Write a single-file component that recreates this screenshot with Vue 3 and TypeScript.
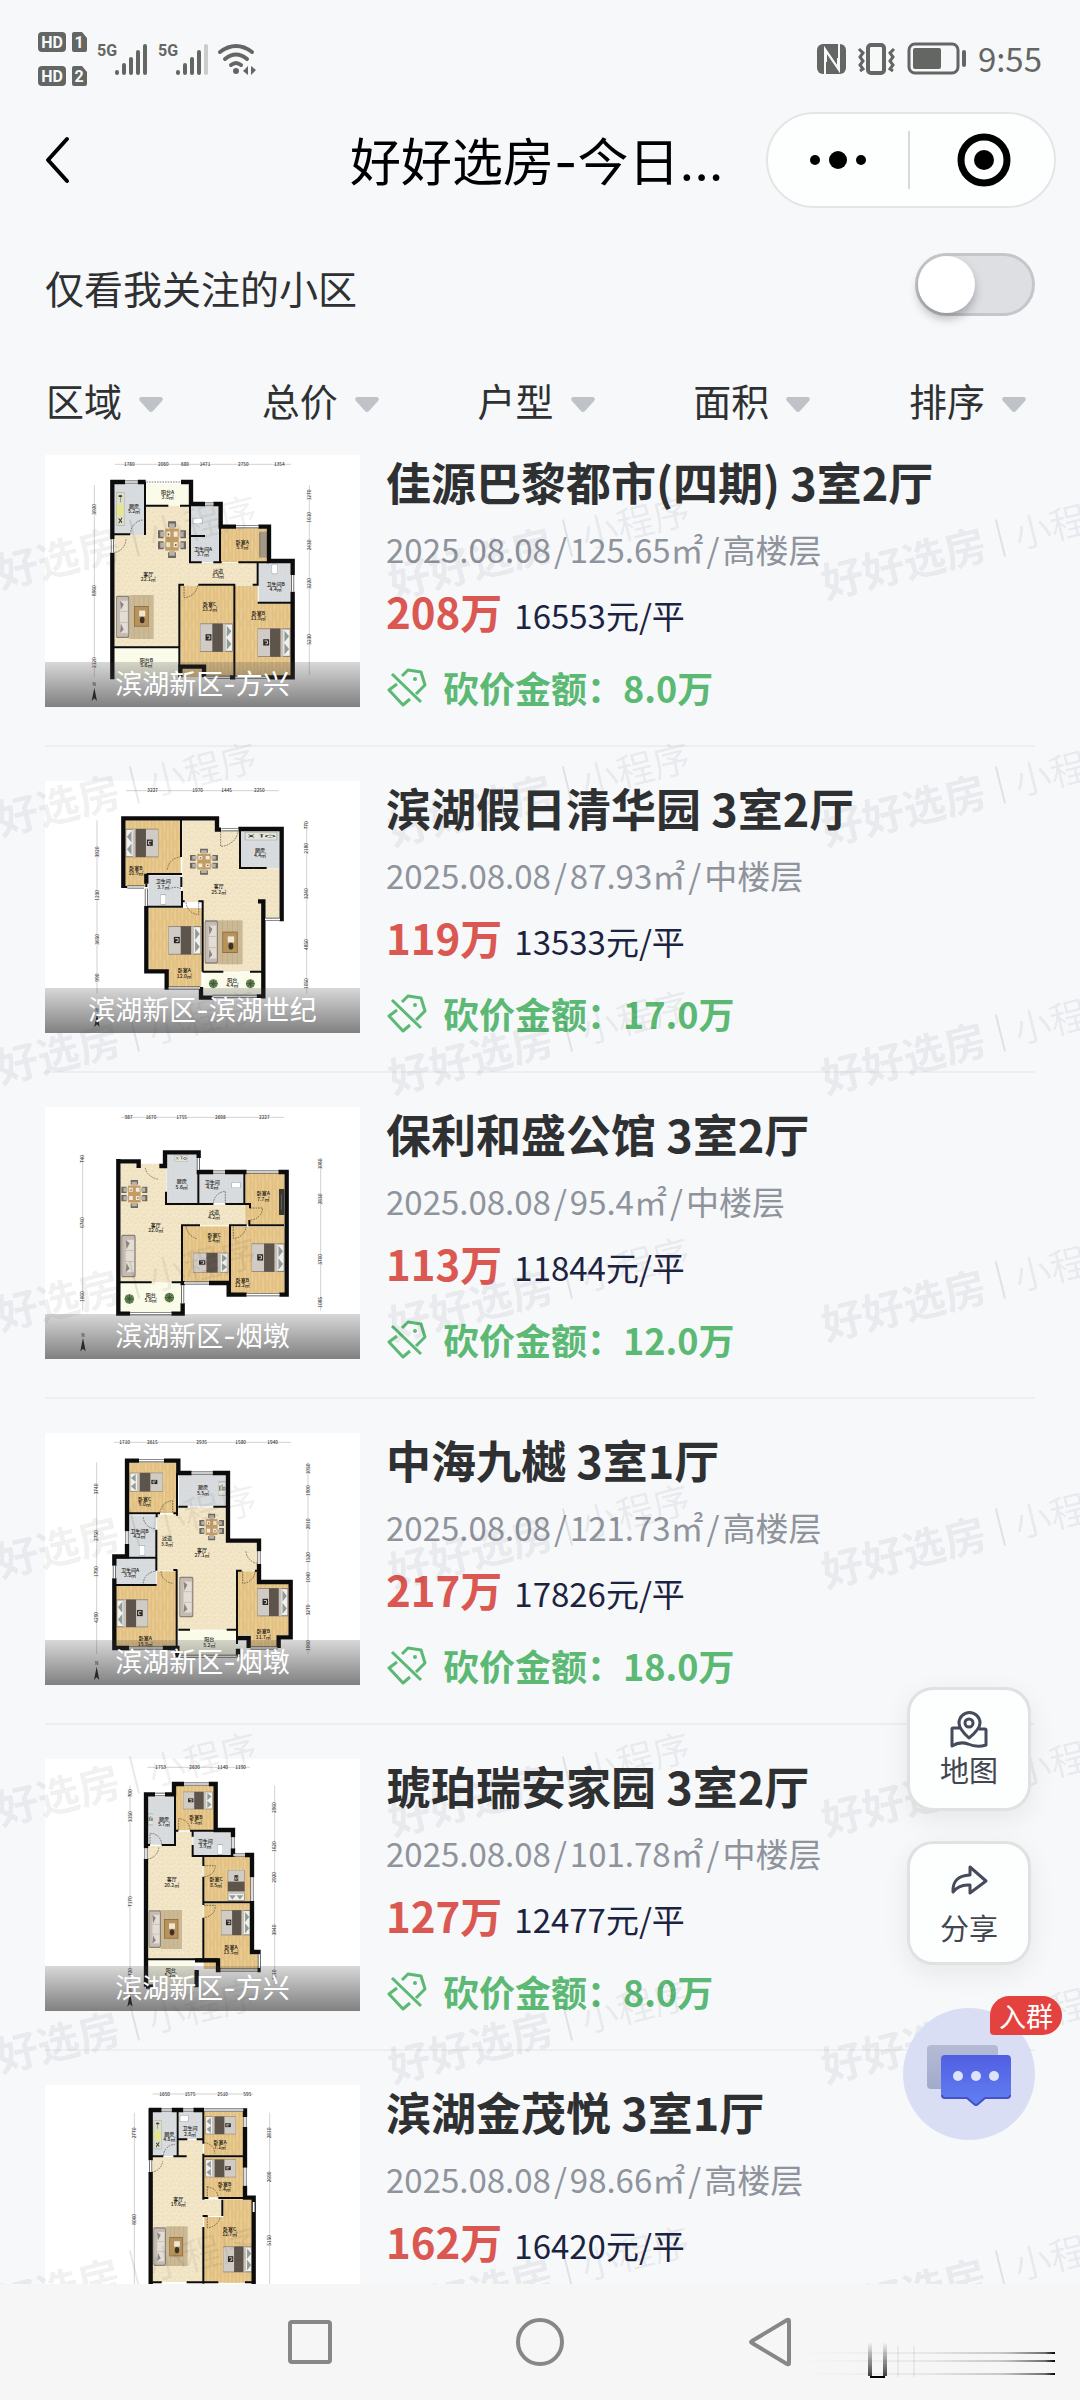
<script setup lang="ts">
import { ref } from 'vue'

type Rect = [kind: string, x: number, y: number, w: number, h: number]
type Furniture = [kind: string, x: number, y: number, w: number, h: number, turn?: 'flip' | 'down']
type Label = [x: number, y: number, name: string, area: string]
type Dim = [pos: number, text: string]

interface Plan {
  top: number
  rooms: Rect[]
  thick: string
  thin: string
  glass: string
  doors: string
  furniture: Furniture[]
  labels: Label[]
  ruler: { y: number; x1: number; x2: number; dims: Dim[] }
  left: { x: number; y1: number; y2: number; dims: Dim[] }
  right: { x: number; y1: number; y2: number; dims: Dim[] }
  north: [number, number]
}

interface Listing {
  name: string
  rooms: string
  date: string
  area: string
  floor: string
  price: number
  unit: number
  cut: string
  district: string
  plan: Plan
}

const plans: Plan[] = [
  {
    top: 45,
    rooms: [
      ['living', 343, 197, 224, 425], ['living', 560, 368, 212, 68], ['tile', 343, 132, 92, 152],
      ['balcony', 439, 132, 128, 65], ['tile', 573, 198, 86, 168], ['wood', 663, 265, 140, 101],
      ['tile', 776, 369, 98, 118], ['wood', 541, 437, 160, 274], ['wood', 705, 437, 68, 60],
      ['wood', 705, 491, 168, 220], ['balcony', 343, 625, 193, 92],
    ],
    thick: 'M337 120V298M337 338V718M331 126H375M413 126H437M543 126H573V192H615M640 192H662V260H708M775 260H807V363H878V405M878 455V712H800M706 712H690M541 712V680H612V712',
    thin: 'M435 126V285M390 283H337M437 197H505M540 197H570M570 190V367H605M573 288H615M660 260V367M640 367H665M715 367H807M773 367V437M758 434H773M773 488H878M535 434H552M595 434H703V712M538 434V680M337 622H538',
    glass: 'M375 126H413M615 192H640M708 260H775M878 405V455M337 298V338M612 712H690M706 712H800',
    doors: 'M392 283A40 40 0 0 1 430 240M378 298A42 42 0 0 1 343 338M552 440V473A42 42 0 0 0 593 436M439 126H543',
    furniture: [
      ['dining', 474, 244, 84, 110], ['rug', 388, 465, 73, 132], ['sofa', 348, 467, 40, 127],
      ['table', 402, 498, 44, 62], ['bed', 600, 550, 98, 86], ['bed', 773, 565, 98, 86],
      ['stove', 348, 156, 26, 102], ['bath', 578, 234, 30, 18], ['bath', 815, 371, 18, 32], ['cabinet', 777, 275, 24, 78],
    ],
    labels: [
      [402, 204, '厨房', '5.2㎡'], [503, 162, '阳台A', '3.8㎡'], [445, 408, '客厅', '22.1㎡'], [609, 332, '卫生间A', '3.7㎡'],
      [727, 312, '卧室A', '5.9㎡'], [654, 398, '过道', '3.3㎡'], [827, 438, '卫生间B', '4.4㎡'], [629, 497, '卧室C', '13.2㎡'],
      [775, 525, '卧室B', '11.8㎡'], [439, 666, '阳台B', '5.6㎡'],
    ],
    ruler: { y: 73, x1: 345, x2: 873, dims: [[388, '1780'], [490, '2060'], [555, '680'], [615, '1471'], [730, '2750'], [838, '1354']] },
    left: { x: 283, y1: 135, y2: 712, dims: [[208, '3920'], [452, '8960'], [668, '2120']] },
    right: { x: 928, y1: 135, y2: 705, dims: [[165, '1270'], [232, '1610'], [315, '2430'], [430, '3220'], [598, '5230']] },
    north: [283, 765],
  },
  {
    top: 62,
    rooms: [
      ['wood', 376, 180, 166, 160], ['wood', 376, 336, 64, 44], ['living', 547, 180, 108, 245],
      ['living', 608, 212, 112, 422], ['living', 700, 325, 138, 150], ['living', 700, 325, 85, 308],
      ['tile', 722, 212, 116, 112], ['tile', 445, 345, 98, 93], ['wood', 446, 443, 160, 190],
      ['wood', 506, 630, 98, 52], ['balcony', 612, 637, 178, 64],
    ],
    thick: 'M370 168V383M364 174H651V208H663M715 206H845V483M439 340V370M439 437V633H500V688M603 680V712H638M770 708H790V423H774',
    thin: 'M543 174V290M544 350V380M440 341H546M440 439H546V392M546 423H554M595 423H608V634M608 634H670M750 634H790M720 206V323H760M800 323H760M370 380H382M439 370V380',
    glass: 'M382 380H432M506 683H600M638 708H770M795 477H840M439 385V437M665 208H715',
    doors: 'M502 328A42 42 0 0 1 541 290M662 212V258A54 54 0 0 0 715 210M558 426A40 40 0 0 0 596 463V426M543 385A35 35 0 0 0 510 385',
    furniture: [
      ['bed', 377, 205, 98, 86, 'flip'], ['dining', 570, 265, 84, 78], ['bed', 505, 497, 98, 86],
      ['rug', 653, 480, 75, 132], ['sofa', 614, 480, 40, 130], ['table', 667, 514, 46, 64],
      ['plant', 626, 656, 28, 28], ['plant', 737, 656, 28, 28], ['counter', 734, 215, 98, 25], ['bath', 481, 402, 17, 31],
    ],
    labels: [
      [408, 328, '卧室B', '10.9㎡'], [490, 369, '卫生间', '3.7㎡'], [656, 384, '客厅', '25.2㎡'], [780, 275, '厨房', '4.4㎡'],
      [553, 636, '卧室A', '12.0㎡'], [697, 664, '阳台', '4.4㎡'],
    ],
    ruler: { y: 91, x1: 378, x2: 836, dims: [[458, '3227'], [593, '1970'], [680, '1445'], [778, '2250']] },
    left: { x: 291, y1: 180, y2: 700, dims: [[275, '3920'], [405, '1230'], [537, '3650'], [652, '990']] },
    right: { x: 920, y1: 180, y2: 700, dims: [[195, '770'], [264, '2180'], [400, '3240'], [553, '4850'], [670, '1050']] },
    north: [291, 782],
  },
  {
    top: 51,
    rooms: [
      ['living', 361, 221, 138, 356], ['living', 490, 344, 258, 62], ['living', 490, 400, 56, 177],
      ['tile', 500, 192, 93, 148], ['tile', 597, 251, 134, 88], ['wood', 736, 247, 117, 156],
      ['wood', 549, 409, 138, 168], ['wood', 693, 410, 160, 200], ['balcony', 362, 580, 184, 90],
    ],
    thick: 'M355 207V677M349 214H416V234M478 228H495V187H596V204M590 246H640M675 246H740M835 246H860V614H838M349 671H390M514 671H548V640M548 573V586M627 579H686V614H740',
    thin: 'M498 305V342H640M595 204V342M676 342H750V355M733 246V342M748 390V406H852M740 406H690V610M600 406H546V580M355 577H455M515 577H552',
    glass: 'M640 246H675M740 246H835M595 204V240M548 586V640M552 579H627M740 614H838M390 671H514',
    doors: 'M436 234A50 40 0 0 0 476 268M558 408A45 45 0 0 0 590 446M640 340A38 38 0 0 1 676 304V340M750 354H788A38 38 0 0 1 752 390M700 410V445A38 38 0 0 0 738 410',
    furniture: [
      ['dining', 364, 270, 78, 84], ['sofa', 364, 434, 43, 128], ['bed', 579, 488, 106, 60],
      ['bed', 755, 460, 98, 86], ['plant', 373, 612, 30, 30], ['plant', 493, 608, 30, 30],
      ['counter', 524, 195, 40, 21], ['bath', 694, 277, 28, 17], ['tv', 837, 297, 16, 78],
    ],
    labels: [
      [545, 280, '厨房', '5.6㎡'], [637, 282, '卫生间', '4.6㎡'], [790, 316, '卧室A', '7.7㎡'], [642, 371, '过道', '4.2㎡'],
      [467, 411, '客厅', '22.0㎡'], [642, 441, '卧室C', '8.4㎡'], [727, 576, '卧室B', '12.2㎡'], [452, 620, '阳台', '5.6㎡'],
    ],
    ruler: { y: 82, x1: 362, x2: 853, dims: [[386, '987'], [453, '1670'], [545, '1755'], [661, '2698'], [793, '2227']] },
    left: { x: 248, y1: 193, y2: 662, dims: [[207, '740'], [398, '6740'], [620, '1660']] },
    right: { x: 962, y1: 205, y2: 662, dims: [[222, '1080'], [327, '2830'], [508, '3700'], [637, '1085']] },
    north: [249, 766],
  },
  {
    top: 67,
    rooms: [
      ['wood', 386, 155, 144, 152], ['tile', 537, 190, 142, 97], ['living', 471, 312, 64, 168],
      ['living', 532, 290, 146, 367], ['living', 670, 395, 103, 86], ['living', 670, 480, 40, 177],
      ['tile', 386, 314, 82, 124], ['tile', 347, 444, 122, 77], ['wood', 347, 526, 182, 182], ['wood', 471, 482, 58, 50],
      ['wood', 714, 482, 58, 40], ['wood', 714, 519, 154, 154], ['wood', 752, 670, 80, 42], ['balcony', 536, 660, 173, 77],
    ],
    thick: 'M381 144V362M381 400V437H343V465M343 503V712H387M375 150H417M492 150H535V187H575M638 187H684V390H777V422M777 460V514H872V680H836V712M714 682H746V712M488 712H532V740M714 714V740',
    thin: 'M383 308H480M520 308H532M470 308V320M469 357V480M531 187V315M535 288H563M640 288H680M343 441H470M343 523H470M530 478V712M520 478H532M711 480V700M708 480H725M765 480H777M535 657H570M680 657H711',
    glass: 'M417 150H492M575 187H638M381 362V400M343 465V503M777 422V460M387 712H488M752 712H832M536 737H710',
    doors: 'M480 306A40 40 0 0 1 518 270V306M738 422A38 38 0 0 0 775 458M483 482A38 38 0 0 0 520 518M728 482V518A38 38 0 0 0 765 482M430 320A36 36 0 0 0 466 354M430 518A38 38 0 0 1 468 482',
    furniture: [
      ['bed', 389, 186, 100, 57, 'flip'], ['dining', 598, 309, 74, 80], ['sofa', 538, 498, 42, 122],
      ['bed', 350, 566, 94, 84, 'flip'], ['bed', 772, 532, 92, 85], ['counter', 655, 212, 22, 44], ['bath', 417, 403, 18, 33],
    ],
    labels: [
      [434, 270, '卧室C', '9.0㎡'], [609, 236, '厨房', '5.5㎡'], [418, 366, '卫生间B', '4.2㎡'], [501, 389, '过道', '3.8㎡'],
      [606, 424, '客厅', '27.1㎡'], [390, 483, '卫生间A', '3.8㎡'], [436, 689, '卧室A', '15.8㎡'], [790, 668, '卧室B', '11.7㎡'], [628, 692, '阳台', '5.2㎡'],
    ],
    ruler: { y: 95, x1: 342, x2: 873, dims: [[374, '1710'], [457, '2615'], [605, '2935'], [722, '1580'], [818, '1940']] },
    left: { x: 290, y1: 155, y2: 730, dims: [[235, '3740'], [375, '2750'], [483, '1790'], [620, '4290']] },
    right: { x: 924, y1: 155, y2: 730, dims: [[175, '1050'], [240, '1900'], [340, '2810'], [440, '1520'], [500, '1040'], [598, '3270'], [705, '1060']] },
    north: [290, 790],
  },
  {
    top: 57,
    rooms: [
      ['tile', 443, 167, 80, 147], ['wood', 527, 137, 115, 134], ['living', 443, 318, 165, 340],
      ['living', 527, 275, 51, 50], ['tile', 580, 275, 117, 71], ['wood', 611, 350, 142, 134],
      ['wood', 611, 490, 140, 197], ['wood', 745, 643, 33, 44], ['balcony', 443, 661, 143, 80],
    ],
    thick: 'M438 157V325M438 357V740M432 163H465M495 163H522V132H552M626 132H647V270H699V292M699 325V350M735 345H756V412M756 483V636H782M438 740H460M590 742V690M585 661H654V690H662M772 690H782',
    thin: 'M525 160V315H485M438 315H450M525 272H535M570 272H700M578 272V290M578 315V348H700M610 348V378M610 410V495M610 533V658M610 487H756M438 658H655',
    glass: 'M465 163H495M552 132H626M699 292V325M700 345H735M756 412V483M662 690H772M778 643V684M438 325V357',
    doors: 'M450 312V280A34 34 0 0 1 485 312M442 357A36 36 0 0 0 476 322M536 270V236A34 34 0 0 1 570 270M612 377H646A34 34 0 0 1 612 410M612 496H646A34 34 0 0 1 612 532',
    furniture: [
      ['bed', 549, 155, 89, 53], ['bed', 683, 390, 51, 92, 'down'], ['bed', 663, 510, 88, 76],
      ['rug', 482, 510, 64, 117], ['sofa', 446, 511, 37, 113], ['table', 492, 537, 43, 59],
      ['counter', 445, 220, 14, 36], ['bath', 652, 313, 17, 31],
    ],
    labels: [
      [492, 243, '厨房', '5.7㎡'], [588, 237, '卧室B', '7.5㎡'], [616, 309, '卫生间', '3.9㎡'], [515, 424, '客厅', '20.2㎡'],
      [648, 424, '卧室C', '8.5㎡'], [693, 627, '卧室A', '13.5㎡'], [512, 696, '阳台', '5.2㎡'],
    ],
    ruler: { y: 82, x1: 442, x2: 750, dims: [[482, '1753'], [584, '2630'], [668, '1140'], [722, '1190']] },
    left: { x: 390, y1: 137, y2: 740, dims: [[160, '700'], [230, '3150'], [485, '7170'], [700, '1720']] },
    right: { x: 824, y1: 137, y2: 735, dims: [[203, '2960'], [320, '1620'], [412, '2920'], [570, '3940'], [705, '1210']] },
    north: [390, 782],
  },
  {
    top: 44,
    rooms: [
      ['tile', 457, 124, 73, 133], ['tile', 537, 124, 72, 82], ['wood', 612, 124, 118, 132],
      ['wood', 612, 261, 118, 120], ['living', 457, 260, 152, 375], ['living', 537, 209, 72, 55],
      ['living', 605, 387, 62, 50], ['wood', 670, 387, 90, 250], ['wood', 612, 440, 148, 197], ['balcony', 457, 640, 152, 90],
    ],
    thick: 'M452 114V270M452 305V800M447 119H485M515 119H550M580 119H612M735 114V140M735 170V292M735 346V382H761V800',
    thin: 'M533 119V258M447 258H490M520 258H560M533 207H562M590 207H610M610 119V220M610 250V388M610 258H735M610 383H625M655 383H760M667 388V437M608 437H623M610 470V640M447 636H485M560 636H655M735 636H765',
    glass: 'M485 119H515M550 119H580M612 119H730M735 140V170M735 292V346M452 270V305M761 395V425',
    doors: 'M490 255A36 36 0 0 1 525 222M455 305A36 36 0 0 0 488 272M612 217A34 34 0 0 1 645 250M622 348V382M622 350A34 34 0 0 1 655 382M622 437V472A38 38 0 0 0 660 440',
    furniture: [
      ['bed', 616, 138, 92, 54, 'flip'], ['bed', 616, 267, 92, 54, 'flip'], ['bed', 669, 528, 88, 78],
      ['rug', 498, 468, 65, 119], ['sofa', 460, 471, 38, 116], ['table', 508, 500, 41, 58],
      ['stove', 461, 149, 24, 88], ['bath', 539, 135, 27, 19],
    ],
    labels: [
      [508, 196, '厨房', '4.8㎡'], [570, 180, '卫生间', '2.8㎡'], [660, 221, '卧室A', '7.1㎡'], [674, 347, '卧室B', '7.4㎡'],
      [535, 392, '客厅', '19.6㎡'], [689, 482, '卧室C', '12.7㎡'],
    ],
    ruler: { y: 71, x1: 458, x2: 760, dims: [[494, '1650'], [570, '1575'], [668, '2510'], [742, '595']] },
    left: { x: 403, y1: 127, y2: 720, dims: [[188, '2770'], [447, '8060'], [700, '1210']] },
    right: { x: 809, y1: 127, y2: 720, dims: [[188, '2810'], [320, '2690'], [510, '5150'], [700, '1140']] },
    north: [403, 770],
  },
]

const listings: Listing[] = [
  { name: '佳源巴黎都市(四期)', rooms: '3室2厅', date: '2025.08.08', area: '125.65', floor: '高楼层', price: 208, unit: 16553, cut: '8.0', district: '滨湖新区-方兴', plan: plans[0] },
  { name: '滨湖假日清华园', rooms: '3室2厅', date: '2025.08.08', area: '87.93', floor: '中楼层', price: 119, unit: 13533, cut: '17.0', district: '滨湖新区-滨湖世纪', plan: plans[1] },
  { name: '保利和盛公馆', rooms: '3室2厅', date: '2025.08.08', area: '95.4', floor: '中楼层', price: 113, unit: 11844, cut: '12.0', district: '滨湖新区-烟墩', plan: plans[2] },
  { name: '中海九樾', rooms: '3室1厅', date: '2025.08.08', area: '121.73', floor: '高楼层', price: 217, unit: 17826, cut: '18.0', district: '滨湖新区-烟墩', plan: plans[3] },
  { name: '琥珀瑞安家园', rooms: '3室2厅', date: '2025.08.08', area: '101.78', floor: '中楼层', price: 127, unit: 12477, cut: '8.0', district: '滨湖新区-方兴', plan: plans[4] },
  { name: '滨湖金茂悦', rooms: '3室1厅', date: '2025.08.08', area: '98.66', floor: '高楼层', price: 162, unit: 16420, cut: '10.0', district: '滨湖新区-方兴', plan: plans[5] },
]

const filters = ['区域', '总价', '户型', '面积', '排序']
const onlyFollowed = ref(false)

const fills: Record<string, string> = {
  wood: 'url(#wood)',
  living: 'url(#stone)',
  tile: 'url(#tile)',
  balcony: '#fafbe9',
}

// Furniture symbols are drawn on a 100 × 100 grid and scaled into place.
function place([, x, y, w, h, turn]: Furniture): string {
  if (turn === 'flip') return `translate(${x + w} ${y}) scale(${-w / 100} ${h / 100})`
  if (turn === 'down') return `translate(${x + w} ${y}) rotate(90) scale(${h / 100} ${w / 100})`
  return `translate(${x} ${y}) scale(${w / 100} ${h / 100})`
}

const marks = Array.from({ length: 8 }, (_, row) =>
  [-40, 393, 826].map((x) => ({ x, y: 159 + Math.round(row * 247.3) })),
).flat()
</script>

<template>
  <div class="page">
    <svg class="defs" width="0" height="0" aria-hidden="true">
      <defs>
        <pattern id="wood" width="22" height="60" patternUnits="userSpaceOnUse">
          <rect width="22" height="60" fill="#e6c588" />
          <path d="M3 0V60M14 0V60" stroke="#dcb877" stroke-width="2" />
          <path d="M9 0V34M19 20V60" stroke="#ecd09a" stroke-width="3" />
        </pattern>
        <pattern id="stone" width="26" height="26" patternUnits="userSpaceOnUse">
          <rect width="26" height="26" fill="#f2e5c6" />
          <path d="M4 5h4M15 9h5M8 18h3M20 22h3" stroke="#e9d9b2" stroke-width="3" />
          <path d="M10 3h4M2 13h4M16 16h4" stroke="#f8efd8" stroke-width="3" />
        </pattern>
        <pattern id="tile" width="14" height="14" patternUnits="userSpaceOnUse">
          <rect width="14" height="14" fill="#d8dcdf" />
          <path d="M0 0H14M0 0V14" stroke="#cbd0d3" stroke-width="1" />
        </pattern>
        <g id="bed">
          <rect width="100" height="100" fill="#8e8377" />
          <rect x="1" y="3" width="38" height="94" fill="#d0cbc4" />
          <rect x="38" y="1" width="32" height="98" fill="#5d544b" />
          <rect x="70" y="1" width="8" height="98" fill="#c9c2b8" />
          <rect x="78" y="4" width="20" height="92" fill="#f1f0ec" />
          <path d="M82 8L96 28L82 48ZM82 52L96 72L82 92Z" fill="#8d9b99" />
          <rect x="17" y="38" width="18" height="22" fill="#2b2724" />
          <path d="M21 44h9v10h-6" stroke="#ddd" stroke-width="3" fill="none" />
        </g>
        <g id="sofa">
          <rect width="100" height="100" rx="8" fill="#8a8179" />
          <rect x="6" y="3" width="86" height="94" rx="6" fill="#c4bbb2" />
          <rect x="30" y="12" width="58" height="24" fill="#e3ddd6" />
          <rect x="30" y="38" width="58" height="24" fill="#e3ddd6" />
          <rect x="30" y="64" width="58" height="24" fill="#e3ddd6" />
          <path d="M30 12l28 8l-22 14ZM30 88l28-8l-22-14Z" fill="#8b8580" />
        </g>
        <g id="rug">
          <rect width="100" height="100" fill="#cbb995" />
          <path d="M20 0V100M40 0V100M60 0V100M80 0V100" stroke="#bfab86" stroke-width="3" />
        </g>
        <g id="table">
          <rect width="100" height="100" fill="#8b6b3d" />
          <rect x="5" y="4" width="90" height="92" fill="#b7925a" />
          <rect x="35" y="22" width="42" height="28" fill="#eee5d5" />
          <circle cx="56" cy="68" r="16" fill="#3a3227" />
        </g>
        <g id="dining">
          <path d="M36 0H64V16H36ZM36 84H64V100H36ZM0 24H20V46H0ZM0 54H20V76H0ZM80 24H100V46H80ZM80 54H100V76H80Z" fill="#6d6660" />
          <path d="M40 6H60V20H40ZM40 80H60V94H40ZM8 28H24V42H8ZM8 58H24V72H8ZM76 28H92V42H76ZM76 58H92V72H76Z" fill="#bab2a8" />
          <rect x="26" y="20" width="48" height="60" fill="#c39c63" />
          <path d="M30 28H44V42H30ZM56 28H70V42H56ZM30 57H44V71H30ZM56 57H70V71H56Z" fill="#f1eadf" />
          <path d="M35 33h5v5h-5ZM61 62h5v5h-5Z" fill="#80522f" />
        </g>
        <g id="stove">
          <rect width="100" height="100" fill="#b9bcae" />
          <rect x="8" y="3" width="84" height="94" fill="#dddfc9" />
          <rect x="12" y="38" width="76" height="30" fill="#e5e789" />
          <path d="M30 12h40M50 8v22M30 78l40 12M70 76l-40 16" stroke="#3c3c38" stroke-width="5" />
        </g>
        <g id="counter">
          <rect width="100" height="100" fill="#aeb2b4" />
          <rect x="3" y="8" width="94" height="84" fill="#e3e5d8" />
          <path d="M12 30l16 34M28 30l-16 34M44 25h14M52 25v40" stroke="#3f4140" stroke-width="5" />
          <circle cx="78" cy="50" r="13" fill="none" stroke="#3f4140" stroke-width="6" />
        </g>
        <g id="bath">
          <rect width="100" height="100" rx="12" fill="#a7abad" />
          <rect x="7" y="7" width="86" height="86" rx="12" fill="#fff" />
        </g>
        <g id="plant">
          <circle cx="50" cy="50" r="48" fill="#6d8a5b" />
          <path d="M50 5V95M5 50H95M18 18L82 82M82 18L18 82" stroke="#39512c" stroke-width="9" />
        </g>
        <g id="cabinet"><rect width="100" height="100" fill="#a39885" /><path d="M12 4V96" stroke="#7c725f" stroke-width="8" /></g>
        <g id="tv"><rect width="100" height="100" fill="#3a3632" /><path d="M45 20V80" stroke="#777" stroke-width="12" /></g>
      </defs>
    </svg>

    <header class="status">
      <svg class="status-left" width="222" height="60" viewBox="36 28 222 60" aria-label="信号">
        <g fill="#646664">
          <rect x="38" y="32" width="28" height="20" rx="4" />
          <path d="M74 32h8l5 6v12a2 2 0 0 1-2 2H74a2 2 0 0 1-2-2V34a2 2 0 0 1 2-2Z" />
          <rect x="38" y="66" width="28" height="20" rx="4" />
          <path d="M74 66h8l5 6v12a2 2 0 0 1-2 2H74a2 2 0 0 1-2-2V68a2 2 0 0 1 2-2Z" />
        </g>
        <g class="tiny" fill="#f7f8fa" text-anchor="middle">
          <text x="52" y="48">HD</text><text x="79" y="48">1</text>
          <text x="52" y="82">HD</text><text x="79" y="82">2</text>
        </g>
        <g class="tiny" fill="#646664"><text x="97" y="56">5G</text><text x="158" y="56">5G</text></g>
        <g stroke="#646664" stroke-width="4" stroke-linecap="round">
          <path d="M117 72v1M124 65v8M131 59v14M138 52v21M145 46v27" />
          <path d="M178 72v1M185 65v8M192 59v14M199 52v21" />
          <path d="M206 46v27" stroke="#cbcdcc" />
        </g>
        <g fill="none" stroke="#646664" stroke-width="4" stroke-linecap="round">
          <path d="M220 52Q236 40 252 52M225 59Q236 50 247 59M231 65Q236 61 241 65" />
        </g>
        <circle cx="236" cy="71" r="3" fill="#646664" />
        <path d="M243 71l5-5v9ZM256 70l-5 5v-9Z" fill="#646664" />
      </svg>
      <div class="status-right">
        <svg width="150" height="34" viewBox="814 41 150 34" aria-label="电量">
          <rect x="815" y="44" width="29" height="30" rx="6" fill="#646664" />
          <path d="M823 74V49L836 68V58M837 44V70L824 51V62" fill="none" stroke="#f7f8fa" stroke-width="2" />
          <rect x="866" y="45" width="16" height="28" rx="3" fill="none" stroke="#646664" stroke-width="4" />
          <path d="M857 49l4 4-3 4 3 4-3 4 3 4-3 2M892 49l-4 4 3 4-3 4 3 4-3 4 3 2" fill="none" stroke="#646664" stroke-width="3" />
          <rect x="907" y="44" width="49" height="29" rx="6" fill="none" stroke="#646664" stroke-width="3" />
          <rect x="911" y="48" width="28" height="21" rx="2" fill="#646664" />
          <rect x="960" y="50" width="4" height="17" rx="2" fill="#646664" />
        </svg>
        <time>9:55</time>
      </div>
    </header>

    <nav class="bar">
      <button class="back" type="button" aria-label="返回">
        <svg width="28" height="50" viewBox="0 0 28 50"><path d="M23 4L4 25L23 46" fill="none" stroke="#000" stroke-width="4" stroke-linecap="round" stroke-linejoin="round" /></svg>
      </button>
      <h1>好好选房-今日...</h1>
      <div class="capsule">
        <button type="button" aria-label="更多">
          <svg width="60" height="20" viewBox="0 0 60 20"><circle cx="7" cy="10" r="5" /><circle cx="30" cy="10" r="9" /><circle cx="53" cy="10" r="5" /></svg>
        </button>
        <i></i>
        <button type="button" aria-label="关闭">
          <svg width="54" height="54" viewBox="0 0 54 54"><circle cx="27" cy="27" r="23" fill="none" stroke="#000" stroke-width="7" /><circle cx="27" cy="27" r="10" /></svg>
        </button>
      </div>
    </nav>

    <label class="follow">
      <span>仅看我关注的小区</span>
      <input v-model="onlyFollowed" type="checkbox" role="switch" />
    </label>

    <div class="filters">
      <label v-for="f in filters" :key="f">
        <select :aria-label="f"><option>{{ f }}</option></select>
        <svg width="24" height="15" viewBox="0 0 24 15"><path d="M2 0H22Q25 1 23 4L14 14Q12 16 10 14L1 4Q-1 1 2 0Z" fill="#bfc2c7" /></svg>
      </label>
    </div>

    <main class="list">
      <article v-for="item in listings" :key="item.name" class="card">
        <figure>
          <svg class="plan" :viewBox="`135 ${item.plan.top} 945 756`" aria-hidden="true">
            <rect x="135" :y="item.plan.top" width="945" height="756" fill="#fff" />
            <rect v-for="(r, i) in item.plan.rooms" :key="i" :x="r[1]" :y="r[2]" :width="r[3]" :height="r[4]" :fill="fills[r[0]]" />
            <use v-for="(f, i) in item.plan.furniture" :key="i" :href="`#${f[0]}`" :transform="place(f)" />
            <path :d="item.plan.doors" fill="none" stroke="#4a443a" stroke-width="2" stroke-dasharray="5 3" />
            <path :d="item.plan.thin" fill="none" stroke="#0c0c0c" stroke-width="6" />
            <path :d="item.plan.thick" fill="none" stroke="#0c0c0c" stroke-width="13" />
            <path :d="item.plan.glass" fill="none" stroke="#333" stroke-width="9" />
            <path :d="item.plan.glass" fill="none" stroke="#fff" stroke-width="5" />
            <g class="room-label">
              <template v-for="(l, i) in item.plan.labels" :key="i">
                <text :x="l[0]" :y="l[1]">{{ l[2] }}</text>
                <text :x="l[0]" :y="l[1] + 16">{{ l[3] }}</text>
              </template>
            </g>
            <path
              :d="`M${item.plan.ruler.x1} ${item.plan.ruler.y}H${item.plan.ruler.x2}M${item.plan.left.x} ${item.plan.left.y1}V${item.plan.left.y2}M${item.plan.right.x} ${item.plan.right.y1}V${item.plan.right.y2}`"
              stroke="#777"
              stroke-width="1"
            />
            <g class="dim">
              <text v-for="d in item.plan.ruler.dims" :key="d[0]" :x="d[0]" :y="item.plan.ruler.y + 5">{{ d[1] }}</text>
              <text v-for="d in item.plan.left.dims" :key="d[0]" :transform="`translate(${item.plan.left.x + 5} ${d[0]}) rotate(-90)`">{{ d[1] }}</text>
              <text v-for="d in item.plan.right.dims" :key="d[0]" :transform="`translate(${item.plan.right.x + 5} ${d[0]}) rotate(-90)`">{{ d[1] }}</text>
              <text :x="item.plan.north[0]" :y="item.plan.north[1] - 26">N</text>
            </g>
            <path :transform="`translate(${item.plan.north[0]} ${item.plan.north[1]})`" d="M0-22L8 18L0 10L-8 18Z" fill="#111" />
          </svg>
          <figcaption>{{ item.district }}</figcaption>
        </figure>
        <div class="info">
          <h2>{{ item.name }} {{ item.rooms }}</h2>
          <p class="meta"><span>{{ item.date }}</span><i>/</i><span>{{ item.area }}㎡</span><i>/</i><span>{{ item.floor }}</span></p>
          <p class="price"><strong>{{ item.price }}万</strong><span>{{ item.unit }}元/平</span></p>
          <p class="cut">
            <svg width="42" height="40" viewBox="0 0 42 40" fill="none" stroke="#5bb974" stroke-width="3">
              <path d="M6 7L35 35M16 9L22 3L35 5L39 18L30 27M11 17L3 23L17 38L24 32" stroke-linejoin="round" />
              <circle cx="29" cy="12" r="2" fill="#5bb974" stroke="none" />
            </svg>
            <span>砍价金额：{{ item.cut }}万</span>
          </p>
        </div>
      </article>

      <svg class="marks" width="100%" height="100%" aria-hidden="true">
        <g v-for="(m, i) in marks" :key="i" :transform="`translate(${m.x} ${m.y}) rotate(-14)`">
          <text class="mark-name" x="0" y="0">好好选房</text>
          <path d="M184-36V2" />
          <text class="mark-kind" x="198" y="-2">小程序</text>
        </g>
      </svg>

      <aside class="floats">
        <button type="button" class="tool">
          <svg width="40" height="38" viewBox="0 0 40 38" fill="none" stroke="#454b5b" stroke-width="3" stroke-linejoin="round">
            <path d="M11 17H4Q3 17 3 18V35Q11 30 19 33Q28 37 37 34V19Q37 18 36 18H30" />
            <path d="M20 27Q10 18 10 12A10 10 0 0 1 31 12Q31 18 20 27Z" />
            <circle cx="20" cy="12" r="4" />
          </svg>
          <span>地图</span>
        </button>
        <button type="button" class="tool share">
          <svg width="40" height="38" viewBox="0 4 40 38" fill="none" stroke="#454b5b" stroke-width="3" stroke-linejoin="round">
            <path d="M21 6L37 20L21 32V24Q10 23 4 31Q3 15 21 14Z" />
          </svg>
          <span>分享</span>
        </button>
        <button type="button" class="chat">
          <svg width="132" height="132" viewBox="903 2008 132 132">
            <defs>
              <linearGradient id="bubble" x1="0" y1="0" x2="0" y2="1"><stop offset="0" stop-color="#515fe2" /><stop offset="1" stop-color="#6280f2" /></linearGradient>
              <linearGradient id="shade" x1="0" y1="0" x2="0" y2="1"><stop offset="0" stop-color="#b5bbd5" /><stop offset="1" stop-color="#a0abcb" /></linearGradient>
            </defs>
            <rect x="927" y="2045" width="71" height="44" rx="4" fill="url(#shade)" />
            <path d="M945 2055H1007Q1011 2055 1011 2059V2095Q1011 2099 1007 2099H985L978 2105Q976 2107 974 2105L967 2099H945Q941 2099 941 2095V2059Q941 2055 945 2055Z" fill="url(#bubble)" />
            <path d="M942 2095Q942 2098 946 2098H967L974 2104Q976 2106 978 2104L985 2098H1006Q1010 2098 1010 2095" fill="none" stroke="#4553c7" stroke-width="2" />
            <g fill="#dde3fb"><circle cx="958" cy="2076" r="5" /><circle cx="976" cy="2076" r="5" /><circle cx="994" cy="2076" r="5" /></g>
          </svg>
          <span class="badge">入群</span>
        </button>
      </aside>
    </main>

    <footer class="system">
      <button type="button" aria-label="最近任务"><svg width="52" height="52" viewBox="0 0 52 52"><rect x="6" y="6" width="40" height="40" rx="2" /></svg></button>
      <button type="button" aria-label="主屏幕"><svg width="52" height="52" viewBox="0 0 52 52"><circle cx="26" cy="26" r="22" /></svg></button>
      <button type="button" aria-label="返回"><svg width="52" height="52" viewBox="0 0 52 52"><path d="M45 5V47Q45 49 43 48L8 27Q6 26 8 25L43 4Q45 3 45 5Z" /></svg></button>
      <svg class="streaks" width="260" height="44" viewBox="796 2340 260 44" aria-hidden="true">
        <defs>
          <linearGradient id="across" gradientUnits="userSpaceOnUse" x1="800" x2="1055" y1="0" y2="0"><stop offset="0" stop-color="#000" stop-opacity="0" /><stop offset=".5" stop-color="#000" stop-opacity=".06" /><stop offset=".8" stop-color="#000" stop-opacity=".2" /><stop offset=".96" stop-color="#000" stop-opacity=".55" /><stop offset="1" stop-color="#000" /></linearGradient>
          <linearGradient id="down" gradientUnits="userSpaceOnUse" x1="0" x2="0" y1="2342" y2="2377"><stop offset="0" stop-color="#000" stop-opacity="0" /><stop offset="1" stop-color="#000" stop-opacity=".75" /></linearGradient>
        </defs>
        <path d="M800 2352H1055V2354H800ZM800 2360H1055V2362H800ZM800 2373H1055V2375H800Z" fill="url(#across)" />
        <path d="M868 2343H872V2376H868ZM883 2343H887V2376H883Z" fill="url(#down)" />
        <path d="M870 2377H885" stroke="#000" stroke-width="2" />
        <path d="M898 2346V2377M914 2346V2377" stroke="#000" stroke-opacity=".05" stroke-width="2" />
      </svg>
    </footer>
  </div>
</template>

<style>
body {
  background: #f6f8fa;
}
</style>

<style scoped>
.page {
  display: flex;
  flex-direction: column;
  height: 100vh;
  overflow: hidden;
  background: #f6f8fa;
  color: #2f3032;
  font-family: "Noto Sans CJK SC", "Noto Sans", sans-serif;
}
.defs {
  position: absolute;
}
button,
select {
  margin: 0;
  padding: 0;
  border: 0;
  background: none;
  color: inherit;
  font: inherit;
}
svg {
  display: block;
  flex: none;
}
h1,
h2,
p,
figure {
  margin: 0;
  font-weight: 400;
}

.status {
  display: flex;
  flex: none;
  justify-content: space-between;
  align-items: center;
  height: 112px;
  padding: 4px 38px 0 36px;
  box-sizing: border-box;
}
.tiny {
  font: 700 16px Roboto, sans-serif;
}
.status-right {
  display: flex;
  align-items: center;
  gap: 12px;
  color: #646664;
}
.status-right time {
  font-size: 33px;
  line-height: 36px;
}

.bar {
  display: flex;
  flex: none;
  align-items: center;
  height: 96px;
  padding: 0 24px 0 44px;
}
.bar h1 {
  flex: 1;
  padding: 6px 0 0 278px;
  color: #000;
  font-family: Inter, "Noto Sans CJK SC", sans-serif;
  font-size: 51px;
  line-height: 90px;
  white-space: nowrap;
}
.capsule {
  display: flex;
  align-items: center;
  width: 290px;
  height: 96px;
  box-sizing: border-box;
  border: 2px solid #e4e5e7;
  border-radius: 48px;
  background: #fdfefe;
}
.capsule button {
  display: flex;
  flex: 1;
  justify-content: center;
}
.capsule button:last-child {
  padding-left: 4px;
}
.capsule i {
  width: 2px;
  height: 58px;
  background: #d8d9da;
}

.follow {
  display: flex;
  flex: none;
  align-items: center;
  justify-content: space-between;
  height: 152px;
  padding: 0 45px;
  font-size: 39px;
}
.follow span {
  padding-top: 6px;
}
.follow input {
  display: flex;
  appearance: none;
  width: 120px;
  height: 63px;
  margin: 0;
  box-sizing: border-box;
  border: 3px solid #c5c6c9;
  border-radius: 32px;
  background: #dedfe3;
}
.follow input::before {
  width: 57px;
  height: 57px;
  border-radius: 50%;
  background: #fff;
  box-shadow: 0 6px 10px rgba(0, 0, 0, 0.25);
  content: "";
}
.follow input:checked {
  justify-content: flex-end;
  background: #5bb974;
}

.filters {
  display: flex;
  flex: none;
  justify-content: space-between;
  height: 80px;
  padding: 0 54px 0 46px;
}
.filters label {
  display: flex;
  align-items: center;
  gap: 16px;
}
.filters select {
  appearance: none;
  width: 77px;
  font-size: 38px;
  line-height: 56px;
}
.filters svg {
  margin-top: 8px;
}

.list {
  position: relative;
  flex: 1;
  min-height: 0;
  padding: 0 45px;
  overflow: hidden;
}
.card {
  display: flex;
  gap: 26px;
  height: 256px;
  padding: 34px 0;
  border-bottom: 2px solid #eceef0;
}
.card:first-child {
  padding-top: 15px;
}
figure {
  display: flex;
  flex: none;
  flex-direction: column;
  width: 315px;
  height: 252px;
}
.plan {
  width: 315px;
  height: 252px;
}
figcaption {
  z-index: 1;
  height: 45px;
  margin-top: -45px;
  background: linear-gradient(rgba(60, 60, 60, 0.2), rgba(60, 60, 60, 0.65));
  color: #fff;
  font-family: Inter, "Noto Sans CJK SC", sans-serif;
  font-size: 27px;
  line-height: 45px;
  text-align: center;
}
.room-label text,
.dim text {
  fill: #1d1b17;
  font-size: 15px;
  font-weight: 500;
  text-anchor: middle;
}
.dim text {
  fill: #444;
  font-size: 14px;
}
.info {
  flex: 1;
  min-width: 0;
  white-space: nowrap;
}
h2 {
  font-size: 45px;
  font-weight: 700;
  line-height: 54px;
}
.meta {
  display: flex;
  margin-top: 18px;
  color: #8f939c;
  font-size: 33px;
  line-height: 44px;
}
.meta i {
  margin: 0 3px;
  font-style: normal;
}
.price {
  display: flex;
  align-items: baseline;
  gap: 12px;
  margin-top: 18px;
  color: #1c2340;
  font-size: 33px;
  line-height: 44px;
}
.price strong {
  color: #db5852;
  font-size: 42px;
}
.cut {
  display: flex;
  align-items: center;
  gap: 15px;
  margin-top: 28px;
  color: #5bb974;
  font-size: 36px;
  font-weight: 700;
  line-height: 44px;
}

.marks {
  position: absolute;
  inset: 0;
  pointer-events: none;
}
.marks text {
  fill: #20242c;
  fill-opacity: 0.075;
}
.marks path {
  stroke: #20242c;
  stroke-opacity: 0.1;
  stroke-width: 2;
}
.mark-name {
  font-size: 42px;
  font-weight: 700;
}
.mark-kind {
  font-size: 37px;
}

.floats {
  position: absolute;
  right: 45px;
  bottom: 144px;
  display: flex;
  flex-direction: column;
  align-items: center;
}
.tool {
  display: flex;
  flex-direction: column;
  align-items: center;
  width: 124px;
  height: 124px;
  padding-top: 21px;
  box-sizing: border-box;
  border: 3px solid #dfe1e3;
  border-radius: 26px;
  background: #fdfefe;
  box-shadow: 0 8px 28px rgba(0, 0, 0, 0.07);
  color: #42464f;
  font-size: 29px;
  line-height: 40px;
}
.tool.share {
  margin: 30px 0 43px;
}
.tool.share span {
  margin-top: 4px;
}
.chat {
  position: relative;
  width: 132px;
  height: 132px;
  border-radius: 50%;
  background: #dadef5;
}
.badge {
  position: absolute;
  top: -12px;
  right: -27px;
  width: 72px;
  border-radius: 20px 20px 20px 4px;
  background: #e3423e;
  color: #fff;
  font-size: 27px;
  line-height: 39px;
}

.system {
  position: relative;
  display: flex;
  flex: none;
  align-items: center;
  justify-content: center;
  gap: 178px;
  height: 116px;
  background: #f6f6f6;
}
.system button svg {
  fill: none;
  stroke: #878787;
  stroke-width: 4;
}
.streaks {
  position: absolute;
  right: 24px;
  bottom: 16px;
}
</style>
